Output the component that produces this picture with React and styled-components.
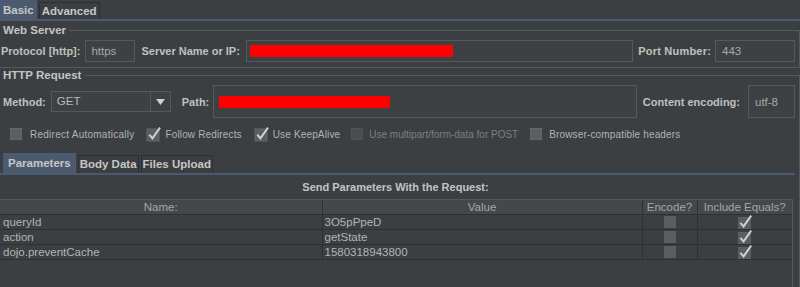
import React from 'react'
import styled, { createGlobalStyle } from 'styled-components'

// base page setup
const GlobalStyle = createGlobalStyle`
  html, body { margin: 0; padding: 0; background: #3c3f41; }
  body { font-family: "Liberation Sans", Arial, sans-serif; }
`;

const Page = styled.div`
  width: 800px;
  height: 287px;
  overflow: hidden;
  background: #3c3f41;
  color: #bbbbbb;
`;

// tabs
const TabBar = styled.div`
  display: flex;
  align-items: flex-end;
  gap: 2px;
  height: ${({ h }) => h}px;
  padding-left: ${({ inset }) => inset || 0}px;
  border-bottom: 2px solid #4c5a70;
`;

const Tab = styled.div`
  box-sizing: border-box;
  height: ${({ active, h }) => (active ? h : h - 2)}px;
  line-height: ${({ active, h }) => (active ? h - 1 : h - 3)}px;
  padding: 0 ${({ pad }) => pad}px;
  background: ${({ active }) => (active ? '#4c5a70' : '#3c3f41')};
  border: 1px solid ${({ active }) => (active ? '#4c5a70' : '#2c2e30')};
  border-bottom: none;
  font-weight: bold;
  font-size: 11.5px;
  color: #c6c6c6;
  white-space: nowrap;
`;

// titled groups
const Group = styled.fieldset`
  margin: 0;
  min-width: 0;
  padding: 3px 4px ${({ bottom }) => bottom}px 0;
  border: 1px solid #56595b;
  border-left: none;
  ${({ open }) => open && 'border-bottom: none;'}
`;

const Legend = styled.legend`
  padding: 0 3px;
  font-weight: bold;
  font-size: 11.5px;
  line-height: 14px;
  color: #c4c4c4;
`;

const Row = styled.div`
  display: flex;
  align-items: center;
  height: ${({ h }) => h}px;
  padding-left: ${({ inset }) => inset || 0}px;
`;

const Label = styled.span`
  font-weight: bold;
  font-size: 11px;
  color: #c0c0c0;
  white-space: nowrap;
  letter-spacing: ${({ ls }) => ls || 0}px;
  margin-left: ${({ ml }) => ml || 0}px;
  margin-right: ${({ mr }) => mr || 0}px;
`;

const Field = styled.div`
  box-sizing: border-box;
  display: flex;
  align-items: center;
  height: ${({ h }) => h}px;
  width: ${({ w }) => (w ? `${w}px` : 'auto')};
  flex: ${({ w }) => (w ? 'none' : '1')};
  padding-left: ${({ pl }) => pl}px;
  border: 1px solid #56595b;
  background: #3e4143;
  color: #a8a8a8;
  font-size: 11.5px;
  margin-left: ${({ ml }) => ml || 0}px;
  margin-right: ${({ mr }) => mr || 0}px;
`;

const Redacted = styled.span`
  display: block;
  width: ${({ w }) => w}px;
  height: 12px;
  background: #ff0000;
  border-radius: 1px;
`;

const Combo = styled.div`
  box-sizing: border-box;
  display: flex;
  width: 120px;
  height: 21px;
  border: 1px solid #56595b;
  background: #3e4143;
  margin-left: 5px;
  margin-right: 11px;
`;

const ComboText = styled.span`
  flex: 1;
  padding-left: 5px;
  line-height: 19px;
  font-size: 11.5px;
  color: #b8b8b8;
`;

const ComboArrow = styled.span`
  width: 19px;
  display: flex;
  align-items: center;
  justify-content: center;
  border-left: 1px solid #56595b;
`;

// checkbox row
const Options = styled.div`
  display: flex;
  align-items: center;
  height: 14px;
  margin-top: 9px;
  padding-left: 10px;
`;

const Option = styled.label`
  display: flex;
  align-items: center;
  margin-right: ${({ mr }) => mr}px;
  font-size: 10px;
  letter-spacing: ${({ ls }) => (ls === undefined ? 0.15 : ls)}px;
  color: ${({ disabled }) => (disabled ? '#7c7e80' : '#b2b2b2')};
  white-space: nowrap;
`;

const Box = styled.span`
  display: inline-block;
  box-sizing: border-box;
  width: 12px;
  height: 12px;
  margin-right: ${({ mr }) => mr || 7}px;
  background: ${({ disabled }) => (disabled ? '#4a4c4e' : '#5b5d5f')};
  border: 1px solid ${({ disabled }) => (disabled ? '#505254' : '#646668')};
`;

const CheckSvg = styled.svg`
  flex: none;
  display: block;
  margin: 0 ${({ mr }) => mr || 3}px 0 0;
`;

const Check = ({ mr }) => (
  <CheckSvg width="16" height="16" viewBox="0 0 16 16" mr={mr}>
    <rect x="1" y="3" width="12" height="12" fill="#5b5d5f" stroke="#646668" />
    <path d="M3.3 8.6 L6.4 12.4 L14 1.6" fill="none" stroke="#d2d2d2" strokeWidth="1.9" />
  </CheckSvg>
);

const CheckBox = ({ checked, disabled, mr }) =>
  checked ? <Check mr={mr} /> : <Box disabled={disabled} mr={mr} />;

// parameters panel
const SubTabs = styled(TabBar)`
  margin-top: 12px;
`;

const ParamsPanel = styled.div`
  padding-top: 5px;
`;

const PanelTitle = styled.div`
  text-align: center;
  font-weight: bold;
  font-size: 11px;
  line-height: 14px;
  color: #c4c4c4;
  margin-bottom: 5px;
  padding-right: 4px;
`;

const TableWrap = styled.div`
  width: 793px;
  height: 130px;
  box-sizing: border-box;
  border-right: 1px solid #56595b;
`;

const Table = styled.table`
  width: 792px;
  table-layout: fixed;
  border-collapse: collapse;
`;

const Th = styled.th`
  height: 14px;
  padding: 0;
  line-height: 14px;
  background: #45484a;
  border-top: 1px solid #55585a;
  border-bottom: 1px solid #2e3032;
  border-left: 1px solid #2e3032;
  font-weight: normal;
  font-size: 11.5px;
  color: #a6a6a6;
  text-align: center;
  white-space: nowrap;
  overflow: hidden;
  &:first-child { border-left: none; }
`;

const Td = styled.td`
  height: 14px;
  padding: 0 0 0 ${({ pl }) => pl || 0}px;
  border-bottom: 1px solid #2e3032;
  border-left: 1px solid #2e3032;
  font-size: 11.5px;
  color: #b4b4b4;
  white-space: nowrap;
  line-height: 14px;
  vertical-align: middle;
  &:first-child { border-left: none; }
`;

const CellBox = styled.span`
  display: block;
  margin: 0 auto;
  width: 12px;
  height: 12px;
  background: #5b5d5f;
`;

const CellCheck = styled.svg`
  display: block;
  margin: 0 auto;
  overflow: visible;
`;

const IncludeCheck = () => (
  <CellCheck width="14" height="13" viewBox="0 0 14 13">
    <rect x="0" y="1" width="13" height="12" fill="#5b5d5f" />
    <path d="M2.4 6.8 L5.6 10.4 L13.2 -0.4" fill="none" stroke="#d2d2d2" strokeWidth="1.9" />
  </CellCheck>
);

const params = [
  { name: 'queryId', value: '3O5pPpeD' },
  { name: 'action', value: 'getState' },
  { name: 'dojo.preventCache', value: '1580318943800' },
];

const App = () => {
  return (
    <Page>
      <GlobalStyle />
      <TabBar h={19}>
        <Tab active h={19} pad={2}>Basic</Tab>
        <Tab h={19} pad={2}>Advanced</Tab>
      </TabBar>

      <Group bottom={5} style={{ marginTop: 2 }}>
        <Legend>Web Server</Legend>
        <Row h={22} inset={1}>
          <Label mr={5}>Protocol [http]:</Label>
          <Field h={22} w={50} pl={5} mr={6}>https</Field>
          <Label mr={6}>Server Name or IP:</Label>
          <Field h={22} pl={3} mr={5}><Redacted w={203} /></Field>
          <Label mr={4} ls={0.2}>Port Number:</Label>
          <Field h={22} w={80} pl={6}>443</Field>
        </Row>
      </Group>

      <Group open bottom={0}>
        <Legend>HTTP Request</Legend>
        <Row h={33} inset={3}>
          <Label>Method:</Label>
          <Combo>
            <ComboText>GET</ComboText>
            <ComboArrow>
              <svg width="9" height="6" viewBox="0 0 9 6">
                <path d="M0 0 H9 L4.5 6 Z" fill="#d0d0d0" />
              </svg>
            </ComboArrow>
          </Combo>
          <Label mr={4}>Path:</Label>
          <Field h={33} pl={5} mr={6}><Redacted w={171} /></Field>
          <Label mr={8}>Content encoding:</Label>
          <Field h={33} w={47} pl={6}>utf-8</Field>
        </Row>

        <Options>
          <Option mr={12} ls={0.25}><CheckBox mr={8} />Redirect Automatically</Option>
          <Option mr={12}><CheckBox checked />Follow Redirects</Option>
          <Option mr={11}><CheckBox checked />Use KeepAlive</Option>
          <Option mr={12} ls={0} disabled><CheckBox disabled mr={6} />Use multipart/form-data for POST</Option>
          <Option mr={0}><CheckBox mr={7} />Browser-compatible headers</Option>
        </Options>

        <SubTabs h={20} inset={3}>
          <Tab active h={20} pad={4}>Parameters</Tab>
          <Tab h={20} pad={1}>Body Data</Tab>
          <Tab h={20} pad={1}>Files Upload</Tab>
        </SubTabs>

        <ParamsPanel>
          <PanelTitle>Send Parameters With the Request:</PanelTitle>
          <TableWrap>
            <Table>
              <colgroup>
                <col style={{ width: 322 }} />
                <col style={{ width: 320 }} />
                <col style={{ width: 55 }} />
                <col style={{ width: 95 }} />
              </colgroup>
              <thead>
                <tr>
                  <Th>Name:</Th>
                  <Th>Value</Th>
                  <Th>Encode?</Th>
                  <Th>Include Equals?</Th>
                </tr>
              </thead>
              <tbody>
                {params.map((p) => (
                  <tr key={p.name}>
                    <Td pl={3}>{p.name}</Td>
                    <Td pl={2}>{p.value}</Td>
                    <Td><CellBox /></Td>
                    <Td><IncludeCheck /></Td>
                  </tr>
                ))}
              </tbody>
            </Table>
          </TableWrap>
        </ParamsPanel>
      </Group>
    </Page>
  );
};

export default App
